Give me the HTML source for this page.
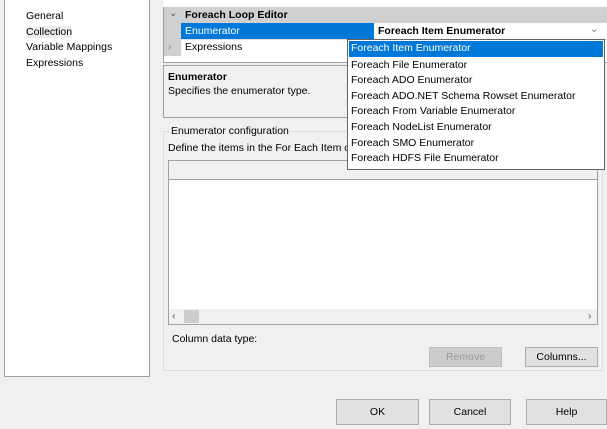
<!DOCTYPE html>
<html><head><style>
*{box-sizing:border-box;margin:0;padding:0}
body{width:607px;height:429px;background:#f0f0f0;font-family:"Liberation Sans",sans-serif;font-size:10.5px;color:#000;position:relative;overflow:hidden}
.a{position:absolute}
.btn{position:absolute;border:1px solid #adadad;background:#e1e1e1;text-align:center;font-size:10.5px}
</style></head><body>
<div class="a" style="left:4px;top:0;width:146px;height:377px;background:#fff;border:1px solid #a0a0a0;border-top:none"></div>
<div class="a" style="left:26px;top:9px;line-height:15.5px">General<br><span style="background:#eee">Collection</span><br>Variable Mappings<br>Expressions</div>

<div class="a" style="left:163px;top:0;width:444px;height:7px;background:#fff"></div>
<div class="a" style="left:163px;top:7px;width:444px;height:56px;background:#fff;border-left:1px solid #a0a0a0;border-bottom:1px solid #a0a0a0"></div>
<div class="a" style="left:164px;top:7px;width:443px;height:16px;background:#d0d0d0"></div>
<div class="a" style="left:164px;top:23px;width:17px;height:33px;background:#d0d0d0"></div>
<div class="a" style="left:169px;top:8px;font-size:10px;color:#555">&#8964;</div>
<div class="a" style="left:185px;top:9px;font-weight:bold">Foreach Loop Editor</div>
<div class="a" style="left:181px;top:23px;width:193px;height:16px;background:#0078d7;color:#fff;padding:2px 0 0 4px">Enumerator</div>
<div class="a" style="left:168px;top:41px;color:#888">&#8250;</div>
<div class="a" style="left:185px;top:41px">Expressions</div>
<div class="a" style="left:181px;top:39px;width:426px;height:1px;background:#e0e0e0"></div>
<div class="a" style="left:374px;top:23px;width:231px;height:16px;background:#fff;font-weight:bold;padding:2px 0 0 4px">Foreach Item Enumerator</div>
<div class="a" style="left:590px;top:24px;color:#777;font-size:10px">&#8964;</div>

<div class="a" style="left:163px;top:65px;width:300px;height:53px;border:1px solid #a0a0a0;padding:4px 0 0 4px;line-height:14px"><b>Enumerator</b><br>Specifies the enumerator type.</div>

<div class="a" style="left:163px;top:131px;width:440px;height:240px;border:1px solid #dcdcdc"></div>
<div class="a" style="left:169px;top:125px;background:#f0f0f0;padding:0 2px">Enumerator configuration</div>
<div class="a" style="left:168px;top:142px">Define the items in the For Each Item collection</div>
<div class="a" style="left:168px;top:160px;width:430px;height:165px;background:#fff;border:1px solid #a0a0a0"></div>
<div class="a" style="left:169px;top:161px;width:428px;height:19px;background:#f0f0f0;border-bottom:1px solid #a0a0a0"></div>
<div class="a" style="left:169px;top:309px;width:428px;height:15px;background:#f0f0f0"></div>
<div class="a" style="left:184px;top:310px;width:15px;height:13px;background:#cdcdcd"></div>
<div class="a" style="left:172px;top:310px;color:#555">&#8249;</div>
<div class="a" style="left:588px;top:310px;color:#555">&#8250;</div>
<div class="a" style="left:172px;top:333px">Column data type:</div>
<div class="btn" style="left:429px;top:347px;width:73px;height:20px;color:#9a9a9a;background:#cccccc;border-color:#bfbfbf;line-height:18px">Remove</div>
<div class="btn" style="left:525px;top:347px;width:73px;height:20px;line-height:18px">Columns...</div>

<div class="btn" style="left:336px;top:399px;width:83px;height:26px;line-height:24px">OK</div>
<div class="btn" style="left:429px;top:399px;width:82px;height:26px;line-height:24px">Cancel</div>
<div class="btn" style="left:526px;top:399px;width:81px;height:26px;line-height:24px">Help</div>

<div class="a" style="left:347px;top:39px;width:258px;height:131px;background:#fff;border:1px solid #646464;line-height:15.6px">
<div style="background:#0078d7;color:#fff;padding-left:2px;margin:1px">Foreach Item Enumerator</div>
<div style="padding-left:3px">Foreach File Enumerator<br>Foreach ADO Enumerator<br>Foreach ADO.NET Schema Rowset Enumerator<br>Foreach From Variable Enumerator<br>Foreach NodeList Enumerator<br>Foreach SMO Enumerator<br>Foreach HDFS File Enumerator</div>
</div>
</body></html>
